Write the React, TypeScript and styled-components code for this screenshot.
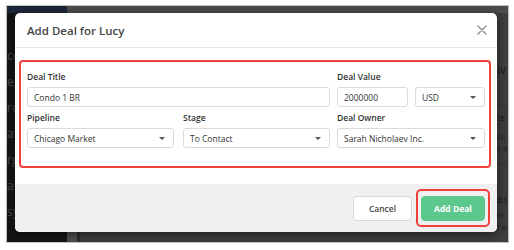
import React from 'react';
import styled, { createGlobalStyle } from 'styled-components';

const GlobalStyle = createGlobalStyle`
  html, body {
    margin: 0;
    padding: 0;
    background: #ffffff;
  }

  body {
    font-family: "Open Sans", "Liberation Sans", sans-serif;
  }
`;

const Frame = styled.div`
  width: 503px;
  height: 238px;
  margin: 5px 0 0 6px;
  box-sizing: border-box;
  border: 1px solid #c4c4c4;
  box-shadow: 0 1px 2px rgba(0, 0, 0, 0.12);
`;

const Screen = styled.div`
  position: relative;
  display: flex;
  width: 100%;
  height: 100%;
  overflow: hidden;
  background: #3c3c3c;
`;

const Sidebar = styled.div`
  display: flex;
  flex-direction: column;
  width: 60px;
  flex-shrink: 0;
  background: #141414;
`;

const SidebarLogo = styled.div`
  height: 7px;
  background: #1c2639;
`;

const NavList = styled.div`
  display: flex;
  flex-direction: column;
  gap: 10px;
  padding-top: 35px;
`;

const NavItem = styled.div`
  font-size: 12px;
  line-height: 16px;
  color: #4a4a4a;
  white-space: nowrap;
`;

const Main = styled.div`
  display: flex;
  flex-direction: column;
  flex: 1;
`;

const TopBar = styled.div`
  height: 7px;
  background: #4b4b4b;
`;

const Content = styled.div`
  display: flex;
  flex: 1;
`;

const SubRail = styled.div`
  width: 10px;
  background: #4b4b4b;
  border-right: 3px solid #2c2c2c;
`;

const Workspace = styled.div`
  flex: 1;
  background: #3c3c3c;
`;

const ActivityPanel = styled.div`
  display: flex;
  flex-direction: column;
  width: 11px;
  background: #3d3d3d;
  color: #1d1d1d;
  white-space: nowrap;
`;

const PanelTitle = styled.div`
  font-size: 12px;
  line-height: 16px;
  padding-top: 49px;
`;

const PanelRule = styled.div<{ $top: number }>`
  height: 1px;
  margin-top: ${(p) => p.$top}px;
  background: #333333;
`;

const PanelLine = styled.div<{ $top: number; $bold?: boolean }>`
  font-size: 8px;
  line-height: 10px;
  margin-top: ${(p) => p.$top}px;
  font-weight: ${(p) => (p.$bold ? 600 : 400)};
`;

const Modal = styled.div`
  position: absolute;
  left: 8px;
  top: 7px;
  width: 482px;
  display: flex;
  flex-direction: column;
  background: #ffffff;
  border-radius: 5px;
  overflow: hidden;
  box-shadow: 0 2px 8px rgba(0, 0, 0, 0.5);
`;

const Header = styled.div`
  display: flex;
  align-items: center;
  justify-content: space-between;
  height: 34px;
  padding: 0 9px 0 12px;
  border-bottom: 1px solid #e6e6e6;
`;

const Title = styled.div`
  font-size: 11.5px;
  font-weight: 600;
  color: #454545;
`;

const CloseButton = styled.button`
  display: flex;
  align-items: center;
  justify-content: center;
  width: 12px;
  height: 12px;
  padding: 0;
  border: none;
  background: none;
  cursor: pointer;
`;

const Body = styled.div`
  padding: 12px 6px 16px 4px;
`;

const Highlight = styled.div`
  border: 2px solid #f2413d;
  border-radius: 4px;
`;

const FormBox = styled(Highlight)`
  padding: 8px 4px 18px 6px;
`;

const FormGrid = styled.div`
  display: grid;
  grid-template-columns: 303px 148px;
  column-gap: 7px;
  row-gap: 4px;
`;

const SplitCell = styled.div<{ $gap: number }>`
  display: grid;
  grid-template-columns: 1fr 1fr;
  column-gap: ${(p) => p.$gap}px;
`;

const Field = styled.div`
  display: flex;
  flex-direction: column;
  min-width: 0;
`;

const Label = styled.label`
  font-size: 8.5px;
  line-height: 13px;
  font-weight: 600;
  color: #333333;
  margin-bottom: 4px;
`;

const Controls = styled.div`
  display: grid;
  grid-template-columns: 71px 70px;
  column-gap: 7px;
`;

const Box = styled.div`
  display: flex;
  align-items: center;
  justify-content: space-between;
  height: 20px;
  box-sizing: border-box;
  padding: 0 8px 0 6px;
  border: 1px solid #dadada;
  border-radius: 3px;
  background: #ffffff;
  font-size: 8.5px;
  color: #333333;
  white-space: nowrap;
`;

const Caret = styled.span`
  width: 0;
  height: 0;
  border-left: 3px solid transparent;
  border-right: 3px solid transparent;
  border-top: 3px solid #555555;
`;

const Footer = styled.div`
  display: flex;
  align-items: center;
  justify-content: flex-end;
  gap: 4px;
  height: 48px;
  padding-right: 7px;
  background: #f0f0f0;
`;

const ButtonHighlight = styled(Highlight)`
  padding: 4px 3px;
  border-radius: 5px;
`;

const Button = styled.button<{ $primary?: boolean }>`
  height: 25px;
  width: ${(p) => (p.$primary ? 64 : 59)}px;
  padding: 0;
  border-radius: 4px;
  border: 1px solid ${(p) => (p.$primary ? '#5cc88d' : '#d8d8d8')};
  background: ${(p) => (p.$primary ? '#5cc88d' : '#ffffff')};
  color: ${(p) => (p.$primary ? '#ffffff' : '#444444')};
  font-family: "Open Sans", "Liberation Sans", sans-serif;
  font-size: 8.5px;
  font-weight: ${(p) => (p.$primary ? 700 : 600)};
  cursor: pointer;
`;

function Select ({ value }: { value: string }) {
  return (
    <Box>
      <span>{value}</span>
      <Caret />
    </Box>
  );
}

const navItems = ['co', 'eg', 'rc', 'at', 'rg', 'as', 'sy'];

export default function App () {
  return (
    <>
      <GlobalStyle />
      <Frame>
        <Screen>
          <Sidebar>
            <SidebarLogo />
            <NavList>
              {navItems.map((item) => <NavItem key={item}>{item}</NavItem>)}
            </NavList>
          </Sidebar>
          <Main>
            <TopBar />
            <Content>
              <SubRail />
              <Workspace />
              <ActivityPanel>
                <PanelTitle>iv</PanelTitle>
                <PanelRule $top={27} />
                <PanelLine $top={7} $bold>te</PanelLine>
                <PanelLine $top={9}>Ni</PanelLine>
                <PanelLine $top={1}>s a</PanelLine>
                <PanelRule $top={10} />
                <PanelLine $top={31} $bold>d t</PanelLine>
                <PanelLine $top={5}>to</PanelLine>
                <PanelLine $top={2}>t e</PanelLine>
              </ActivityPanel>
            </Content>
          </Main>

          <Modal>
            <Header>
              <Title>Add Deal for Lucy</Title>
              <CloseButton aria-label='Close'>
                <svg width='10' height='10' viewBox='0 0 10 10'>
                  <path d='M1 1 L9 9 M9 1 L1 9' stroke='#8a8a8a' strokeWidth='1.3' strokeLinecap='round' />
                </svg>
              </CloseButton>
            </Header>
            <Body>
              <FormBox>
                <FormGrid>
                  <Field>
                    <Label>Deal Title</Label>
                    <Box>Condo 1 BR</Box>
                  </Field>
                  <Field>
                    <Label>Deal Value</Label>
                    <Controls>
                      <Box>2000000</Box>
                      <Select value='USD' />
                    </Controls>
                  </Field>
                  <SplitCell $gap={9}>
                    <Field>
                      <Label>Pipeline</Label>
                      <Select value='Chicago Market' />
                    </Field>
                    <Field>
                      <Label>Stage</Label>
                      <Select value='To Contact' />
                    </Field>
                  </SplitCell>
                  <Field>
                    <Label>Deal Owner</Label>
                    <Select value='Sarah Nicholaev Inc.' />
                  </Field>
                </FormGrid>
              </FormBox>
            </Body>
            <Footer>
              <Button>Cancel</Button>
              <ButtonHighlight>
                <Button $primary>Add Deal</Button>
              </ButtonHighlight>
            </Footer>
          </Modal>
        </Screen>
      </Frame>
    </>
  );
}
